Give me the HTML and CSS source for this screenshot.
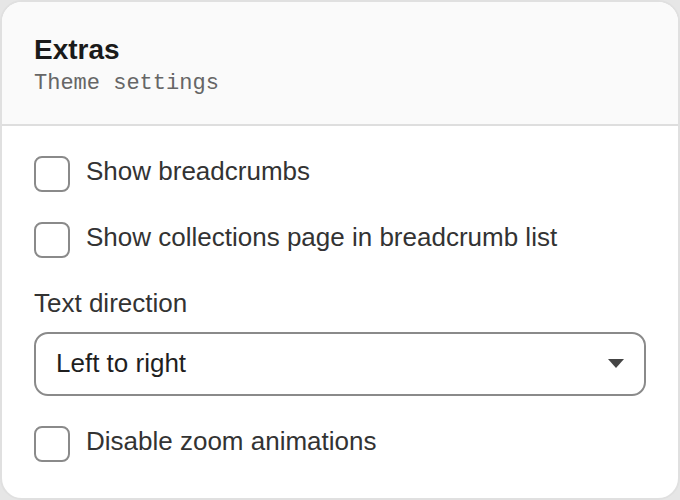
FILE: index.html
```html
<!DOCTYPE html>
<html>
<head>
<meta charset="utf-8">
<link rel="stylesheet" href="styles.css">
</head>
<body>
<div class="card">
  <div class="header">
    <div class="title">Extras</div>
    <div class="subtitle">Theme settings</div>
  </div>
  <div class="content">
    <label class="check-row"><span class="box"></span><span class="label">Show breadcrumbs</span></label>
    <label class="check-row"><span class="box"></span><span class="label">Show collections page in breadcrumb list</span></label>
    <div class="field">
      <div class="field-label">Text direction</div>
      <div class="select">
        <span class="select-value">Left to right</span>
        <svg class="caret" width="16" height="9" viewBox="0 0 16 9"><path d="M0 0H16L8 9Z" fill="#444"/></svg>
      </div>
    </div>
    <label class="check-row"><span class="box"></span><span class="label">Disable zoom animations</span></label>
  </div>
</div>
</body>
</html>
```
FILE: styles.css
```css
html, body {
  margin: 0;
  padding: 0;
  background: #e6e6e6;
}
body {
  width: 680px;
  height: 500px;
  font-family: "Liberation Sans", Arial, sans-serif;
}
.card {
  box-sizing: border-box;
  width: 680px;
  height: 500px;
  background: #ffffff;
  border: 2px solid #e0e0e0;
  border-radius: 22px;
  overflow: hidden;
}
.header {
  background: #fafafa;
  border-bottom: 2px solid #dedede;
  padding: 31px 32px 0 32px;
  height: 91px;
}
.title {
  font-size: 28px;
  font-weight: bold;
  color: #1a1a1a;
  line-height: 34px;
}
.subtitle {
  font-family: "Liberation Mono", "Courier New", monospace;
  font-size: 22px;
  color: #666666;
  line-height: 26px;
  margin-top: 4px;
}
.content {
  padding: 30px 32px 0 32px;
  display: flex;
  flex-direction: column;
  gap: 30px;
}
.check-row {
  display: flex;
  align-items: center;
  gap: 16px;
  height: 36px;
}
.box {
  box-sizing: border-box;
  width: 36px;
  height: 36px;
  border: 2px solid #8a8a8a;
  border-radius: 8px;
  background: #fff;
  flex: none;
}
.label {
  font-size: 26px;
  color: #333333;
  line-height: 30px;
  margin-top: -6px;
}
.field {
  display: flex;
  flex-direction: column;
  gap: 14px;
}
.field-label {
  font-size: 26px;
  color: #333333;
  line-height: 30px;
}
.select {
  box-sizing: border-box;
  height: 64px;
  border: 2px solid #8a8a8a;
  border-radius: 14px;
  display: flex;
  align-items: center;
  justify-content: space-between;
  padding: 0 20px 0 20px;
}
.select-value {
  font-size: 26px;
  color: #1f1f1f;
  line-height: 30px;
  margin-top: -2px;
}
.caret {
  display: block;
  margin-top: -2px;
}
```
